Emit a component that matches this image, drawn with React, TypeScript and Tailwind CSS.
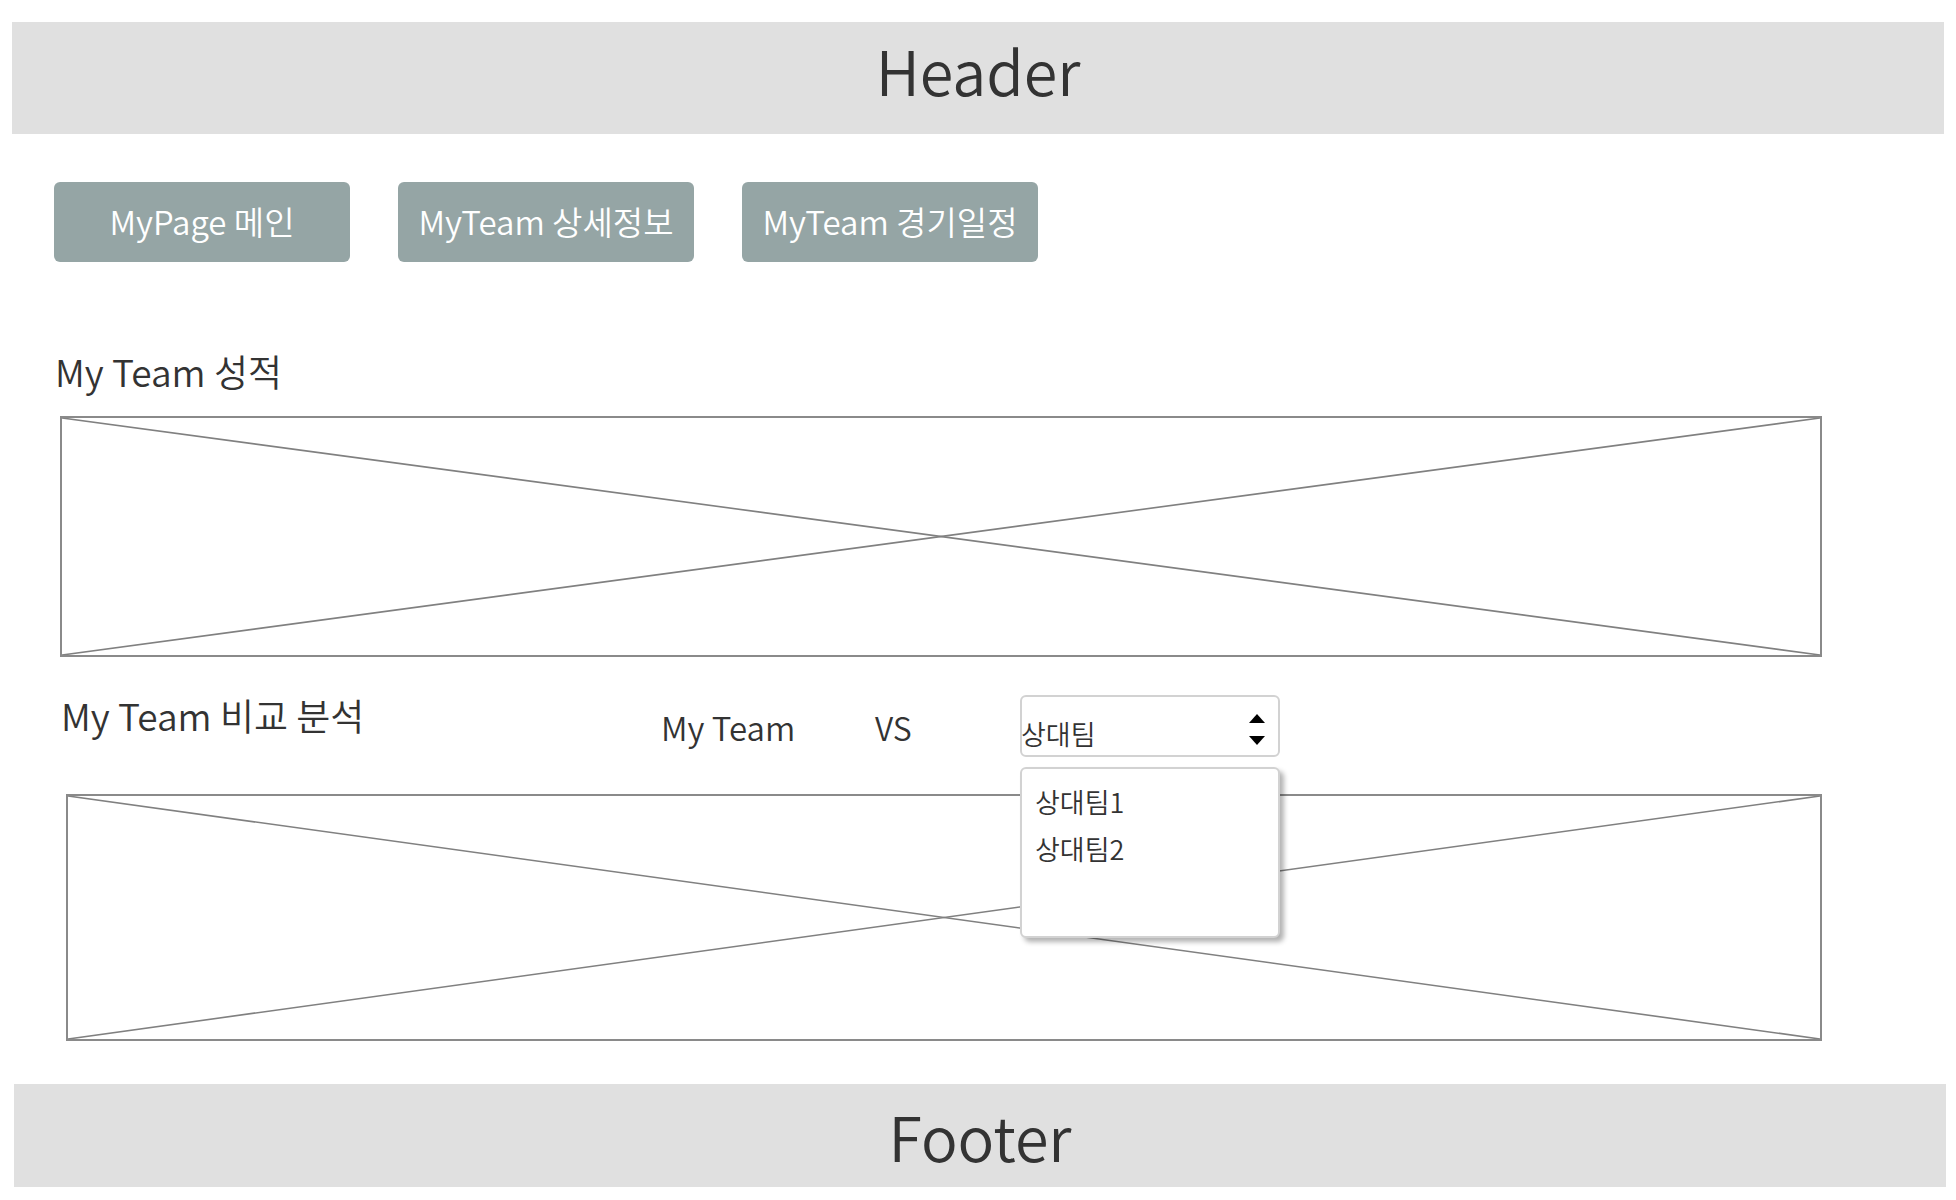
import React from 'react';

const CrossBox: React.FC<{ className: string }> = ({ className }) => (
  <div className={`relative border-2 border-[#8a8a8a] bg-white ${className}`}>
    <svg className="absolute inset-0 w-full h-full" viewBox="0 0 100 100" preserveAspectRatio="none">
      <line x1="0" y1="0" x2="100" y2="100" stroke="#808080" strokeWidth="1.6" vectorEffect="non-scaling-stroke" />
      <line x1="100" y1="0" x2="0" y2="100" stroke="#808080" strokeWidth="1.6" vectorEffect="non-scaling-stroke" />
    </svg>
  </div>
);

const tabs = ['MyPage 메인', 'MyTeam 상세정보', 'MyTeam 경기일정'];

export default function App() {
  return (
    <div className="w-[1956px] h-[1200px] bg-white text-[#333] flex flex-col overflow-hidden font-['Noto_Sans_CJK_KR','Noto_Sans',sans-serif] font-[350]">
      <header className="mt-[22px] ml-[12px] w-[1932px] h-[112px] pb-[16px] bg-[#e0e0e0] flex items-center justify-center text-[61px]">
        Header
      </header>

      <nav className="mt-[48px] ml-[54px] flex gap-[48px]">
        {tabs.map((t) => (
          <button
            key={t}
            className="w-[296px] h-[80px] rounded-[6px] bg-[#95a5a5] text-white text-[33px] flex items-center justify-center"
          >
            {t}
          </button>
        ))}
      </nav>

      <h2 className="mt-[91px] ml-[55px] text-[37px] leading-[37px]">My Team 성적</h2>
      <CrossBox className="mt-[26px] ml-[60px] w-[1762px] h-[241px]" />

      <div className="mt-[38px] h-[62px] flex items-start">
        <h2 className="ml-[61px] mt-[2px] w-[540px] text-[37px] leading-[37px]">My Team 비교 분석</h2>
        <span className="ml-[60px] mt-[16px] w-[214px] text-[33px] leading-[32px]">My Team</span>
        <span className="mt-[16px] w-[145px] text-[32px] leading-[32px]">VS</span>
        <div className="relative">
          <div className="w-[260px] h-[62px] border-2 border-[#d2d2d2] rounded-[6px] bg-white flex items-end justify-between pb-[6px]">
            <span className="text-[27px] leading-[30px] -ml-[1px]">상대팀</span>
            <div className="flex flex-col items-center gap-[13px] mr-[13px] mb-[4px]">
              <svg width="16" height="9" viewBox="0 0 16 9"><path d="M8 0 L16 9 L0 9 Z" fill="#000" /></svg>
              <svg width="16" height="9" viewBox="0 0 16 9"><path d="M0 0 L16 0 L8 9 Z" fill="#000" /></svg>
            </div>
          </div>
          <ul className="absolute left-0 top-[72px] z-10 w-[260px] h-[171px] border-2 border-[#d2d2d2] rounded-[6px] bg-white shadow-[4px_4px_5px_rgba(0,0,0,0.3)] pl-[13px] pt-[9px] text-[27px] leading-[47px]">
            <li>상대팀1</li>
            <li>상대팀2</li>
          </ul>
        </div>
      </div>

      <CrossBox className="mt-[37px] ml-[66px] w-[1756px] h-[247px]" />

      <footer className="mt-[43px] ml-[14px] w-[1932px] h-[103px] bg-[#e0e0e0] flex items-center justify-center text-[61px]">
        Footer
      </footer>
    </div>
  );
}
